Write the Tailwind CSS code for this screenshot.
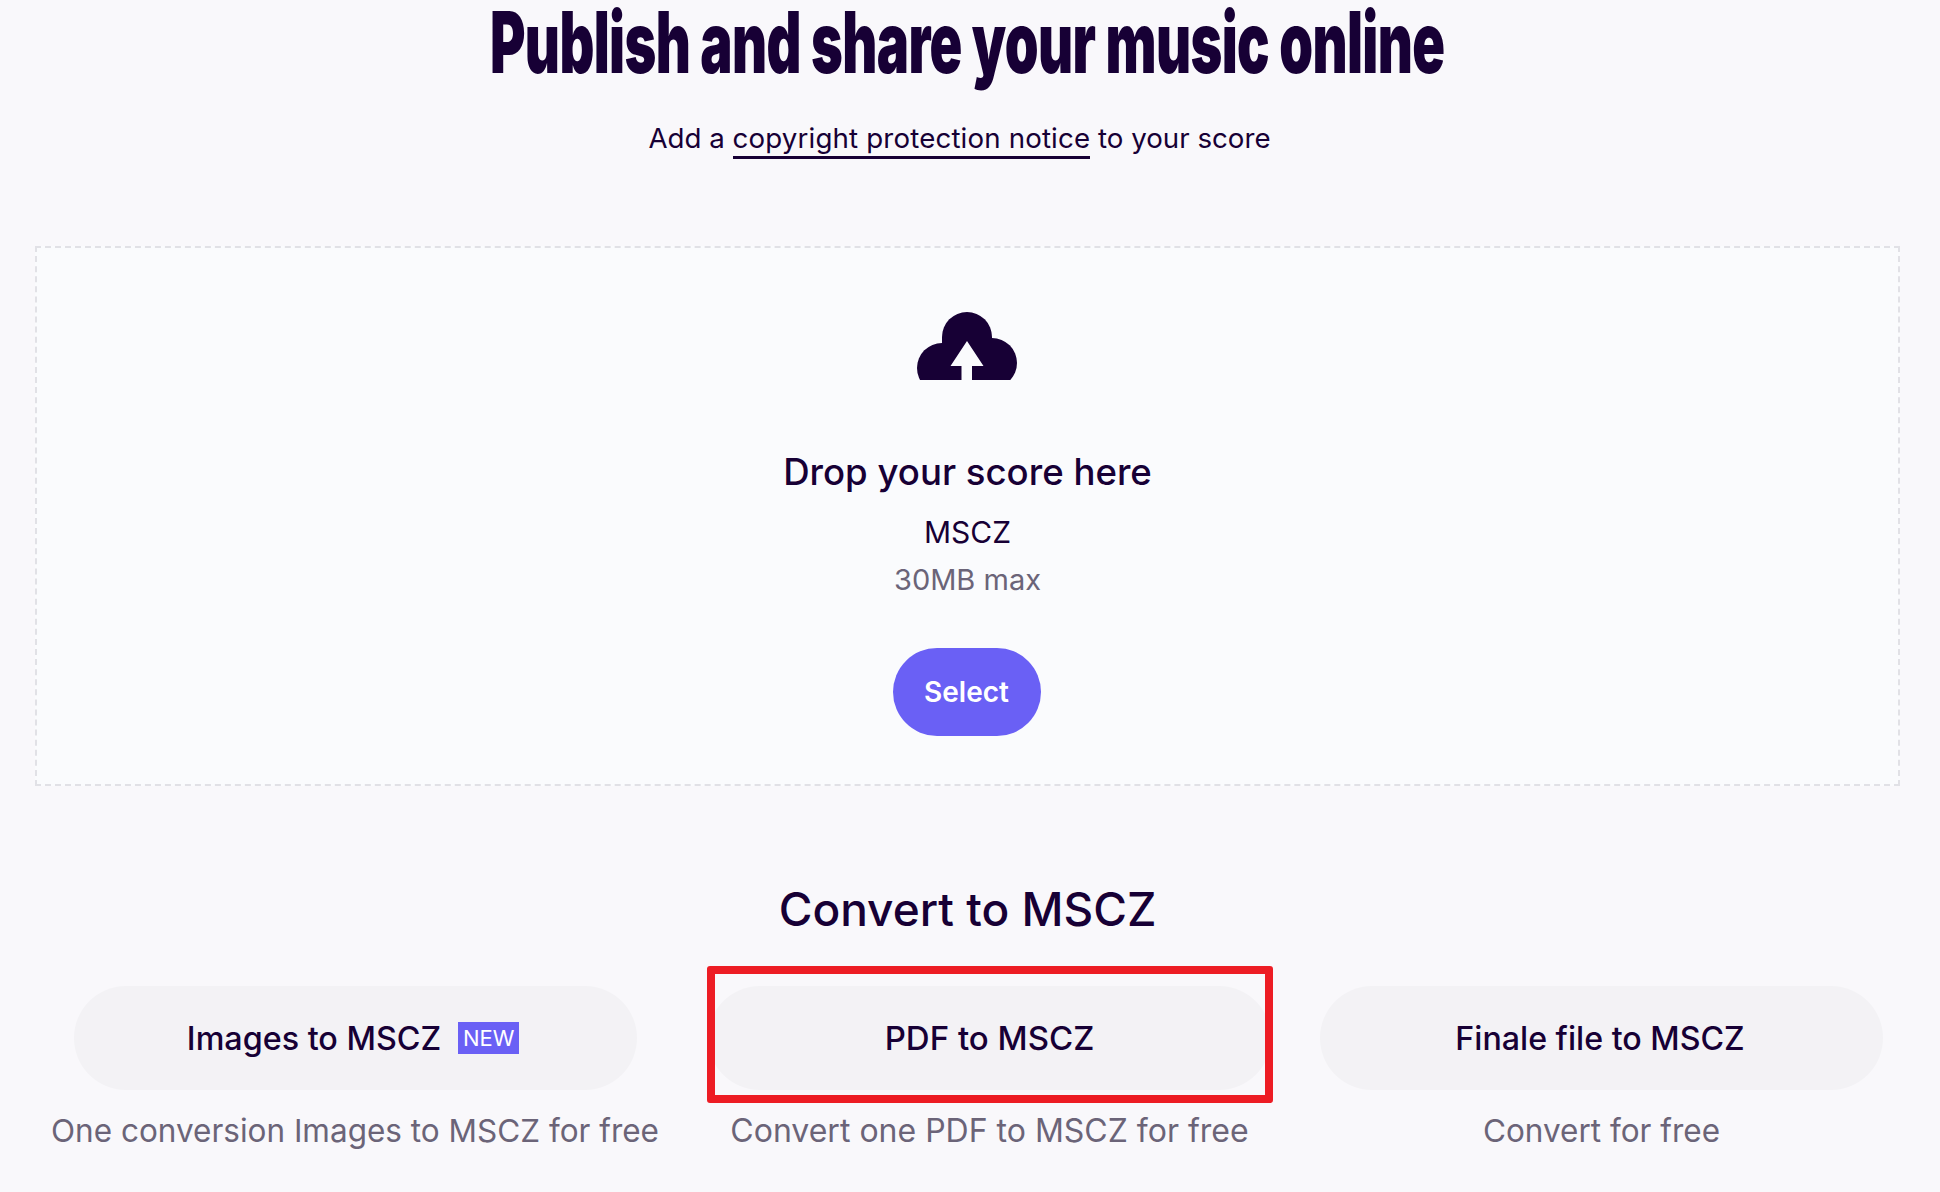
<!DOCTYPE html>
<html lang="en">
<head>
<meta charset="utf-8">
<script src="https://cdn.jsdelivr.net/npm/@tailwindcss/browser@4"></script>
<title>Publish and share your music online</title>
</head>
<body class="bg-[#f9f8fb] font-['Inter',sans-serif] text-[#170035] overflow-hidden">
<div class="relative w-[1935px] h-[1192px] overflow-hidden">
  <main class="flex flex-col items-center">
    <h1 class="h-[86px] w-full flex justify-center whitespace-nowrap font-black text-[85px] leading-[86px]"><span class="inline-block scale-x-[0.637] tracking-[-1px]">Publish and share your music online</span></h1>
    <p class="mt-[34px] mr-[16px] text-[27.7px] leading-[36px] whitespace-nowrap">Add a <a class="pb-[1px] border-b-[3px] border-[#170035] tracking-[0.15px]">copyright protection notice</a> to your score</p>
    <section class="mt-[90px] w-[1865px] h-[540px] border-2 border-dashed border-[#e1e1e6] bg-[#fafbfd] flex flex-col items-center">
      <svg class="mt-[64px] mr-[2px] w-[100px] h-[68px]" viewBox="0 0 100 68" aria-hidden="true">
        <g fill="#170035">
          <circle cx="50" cy="25" r="25"/>
          <circle cx="25" cy="56" r="25"/>
          <circle cx="75" cy="51" r="25"/>
          <rect x="25" y="25" width="50" height="43"/>
        </g>
        <path fill="#fafbfd" d="M50 29L66.500 54H55V68H44.500V54H33.500Z"/>
      </svg>
      <h2 class="mt-[70px] text-[36.6px] leading-[44px] font-medium whitespace-nowrap">Drop your score here</h2>
      <p class="mt-[20px] text-[30px] leading-[36px]">MSCZ</p>
      <p class="mt-[12px] text-[29px] leading-[36px] text-[#6b6478]">30MB max</p>
      <button class="mt-[50px] mr-[2px] w-[148px] h-[88px] rounded-full bg-[#6a60f5] text-white text-[28px] font-semibold">Select</button>
    </section>
    <h2 class="mt-[95px] text-[46px] leading-[56px] font-medium whitespace-nowrap">Convert to MSCZ</h2>
    <div class="mt-[49px] flex gap-[50px] w-[1832px] mr-[-1px]">
      <div class="w-[606px] flex flex-col items-center">
        <div class="w-[563px] h-[104px] pt-[2px] pr-[4px] rounded-[52px] bg-[#f3f2f5] flex items-center justify-center gap-[17px] text-[32.3px] font-medium">Images to MSCZ <span class="w-[61px] h-[32px] mt-[-2px] bg-[#6a60f5] text-white text-[22px] font-normal flex items-center justify-center">NEW</span></div>
        <p class="mt-[21px] text-[31.5px] leading-[40px] text-[#6b6478] whitespace-nowrap">One conversion Images to MSCZ for free</p>
      </div>
      <div class="w-[563px] flex flex-col items-center">
        <div class="w-[563px] h-[104px] pt-[2px] rounded-[52px] bg-[#f3f2f5] flex items-center justify-center text-[33px] font-medium">PDF to MSCZ</div>
        <p class="mt-[21px] text-[32px] leading-[40px] text-[#6b6478] whitespace-nowrap">Convert one PDF to MSCZ for free</p>
      </div>
      <div class="w-[563px] flex flex-col items-center ml-[-1px]">
        <div class="w-[563px] h-[104px] pt-[2px] pr-[3px] rounded-[52px] bg-[#f3f2f5] flex items-center justify-center text-[32.2px] font-medium">Finale file to MSCZ</div>
        <p class="mt-[21px] text-[31.5px] leading-[40px] text-[#6b6478] whitespace-nowrap">Convert for free</p>
      </div>
    </div>
  </main>
  <div class="absolute left-[707px] top-[966px] w-[566px] h-[137px] border-[8px] border-[#ed1c24] rounded-[3px]"></div>
</div>
</body>
</html>
